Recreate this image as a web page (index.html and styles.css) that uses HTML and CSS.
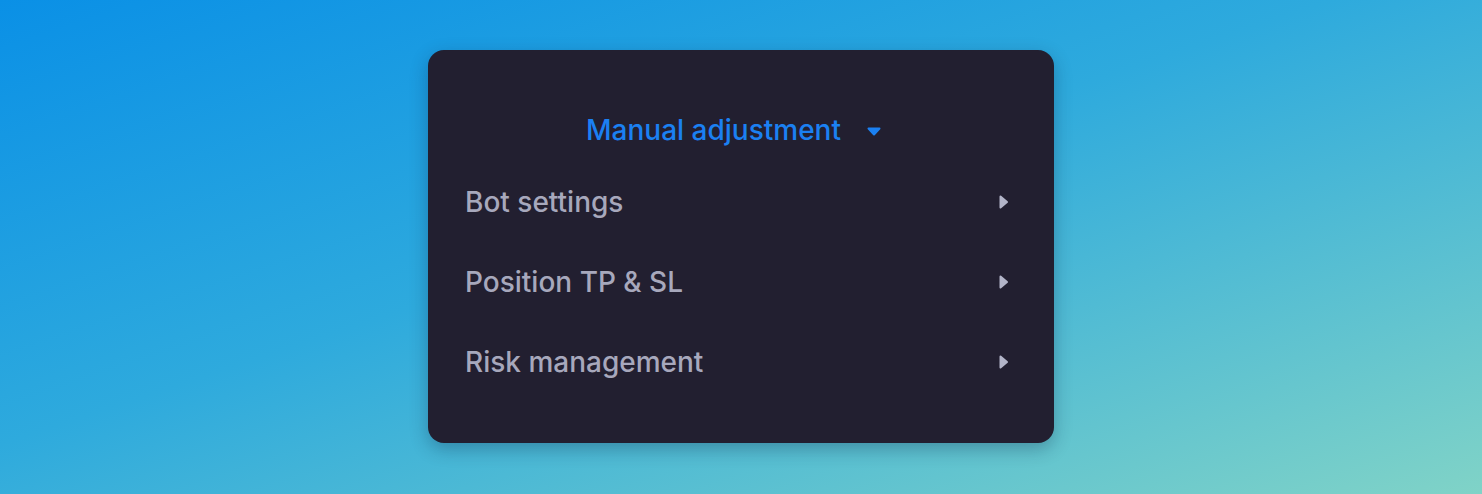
FILE: index.html
```html
<!DOCTYPE html>
<html lang="en">
<head>
  <meta charset="UTF-8" />
  <meta name="viewport" content="width=device-width, initial-scale=1.0" />
  <title>Adjustment menu</title>
  <link rel="stylesheet" href="styles.css">
</head>
<body>
  <section class="menu">
    <div class="menu-title">
      Manual adjustment
      <svg class="caret" width="14" height="9" viewBox="0 0 14 9"><path d="M1.5 1.5 L12.5 1.5 L7 7.5 Z" fill="currentColor" stroke="currentColor" stroke-width="2" stroke-linejoin="round"/></svg>
    </div>
    <ul class="menu-list">
      <li class="menu-item">
        <span>Bot settings</span>
        <svg class="arrow" width="10" height="14" viewBox="0 0 10 14"><path d="M1.5 1.5 L8 7 L1.5 12.5 Z" fill="currentColor" stroke="currentColor" stroke-width="2" stroke-linejoin="round"/></svg>
      </li>
      <li class="menu-item">
        <span>Position TP &amp; SL</span>
        <svg class="arrow" width="10" height="14" viewBox="0 0 10 14"><path d="M1.5 1.5 L8 7 L1.5 12.5 Z" fill="currentColor" stroke="currentColor" stroke-width="2" stroke-linejoin="round"/></svg>
      </li>
      <li class="menu-item">
        <span>Risk management</span>
        <svg class="arrow" width="10" height="14" viewBox="0 0 10 14"><path d="M1.5 1.5 L8 7 L1.5 12.5 Z" fill="currentColor" stroke="currentColor" stroke-width="2" stroke-linejoin="round"/></svg>
      </li>
    </ul>
  </section>
</body>
</html>
```

FILE: styles.css
```css
* { box-sizing: border-box; margin: 0; padding: 0; }
html, body { height: 100%; }
body {
  font-family: Inter, "Noto Sans", Arial, sans-serif;
  background: linear-gradient(to bottom right, #0a90e6, #2eaadd 45%, #80d3c7);
  display: flex;
  justify-content: center;
  align-items: flex-start;
  padding-top: 50px;
  overflow: hidden;
}
.menu {
  width: 626px;
  height: 393px;
  background-color: #221f30;
  border-radius: 16px;
  box-shadow: 0 6px 18px rgba(10, 30, 60, 0.3);
  padding: 60px 45px 0 37px;
}
.menu-title {
  display: flex;
  justify-content: center;
  align-items: center;
  gap: 26px;
  height: 40px;
  margin-left: -7px;
  color: #1b80f2;
  font-size: 28px;
  font-weight: 500;
}
.caret { margin-top: 2px; }
.menu-list {
  list-style: none;
  margin-top: 12px;
}
.menu-item {
  display: flex;
  justify-content: space-between;
  align-items: center;
  height: 80px;
  color: #a7a8bc;
  font-size: 28px;
  font-weight: 500;
}
.arrow { color: #b3b5c9; }
```
